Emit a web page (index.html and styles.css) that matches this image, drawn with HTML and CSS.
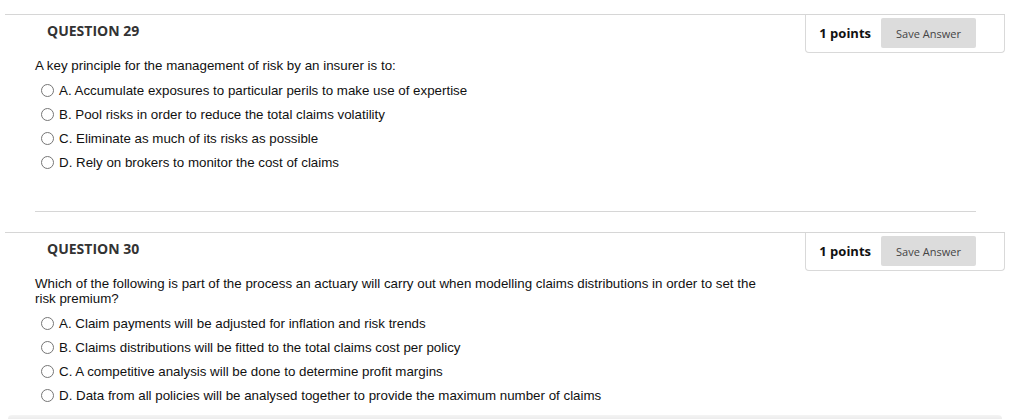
FILE: index.html
```html
<!DOCTYPE html>
<html>
<head>
<meta charset="utf-8">
<link rel="stylesheet" href="styles.css">
</head>
<body>
<div class="wrap">
  <section class="question">
    <div class="qhead">
      <h2 class="qtitle">QUESTION 29</h2>
      <div class="points">
        <span class="pts">1 points</span>
        <button class="save">Save Answer</button>
      </div>
    </div>
    <div class="qbody sep">
      <p class="qtext">A key principle for the management of risk by an insurer is to:</p>
      <ul class="opts">
        <li class="opt"><span class="radio"></span><span>A. Accumulate exposures to particular perils to make use of expertise</span></li>
        <li class="opt"><span class="radio"></span><span>B. Pool risks in order to reduce the total claims volatility</span></li>
        <li class="opt"><span class="radio"></span><span>C. Eliminate as much of its risks as possible</span></li>
        <li class="opt"><span class="radio"></span><span>D. Rely on brokers to monitor the cost of claims</span></li>
      </ul>
    </div>
  </section>
  <section class="question">
    <div class="qhead">
      <h2 class="qtitle">QUESTION 30</h2>
      <div class="points">
        <span class="pts">1 points</span>
        <button class="save">Save Answer</button>
      </div>
    </div>
    <div class="qbody">
      <p class="qtext">Which of the following is part of the process an actuary will carry out when modelling claims distributions in order to set the risk premium?</p>
      <ul class="opts">
        <li class="opt"><span class="radio"></span><span>A. Claim payments will be adjusted for inflation and risk trends</span></li>
        <li class="opt"><span class="radio"></span><span>B. Claims distributions will be fitted to the total claims cost per policy</span></li>
        <li class="opt"><span class="radio"></span><span>C. A competitive analysis will be done to determine profit margins</span></li>
        <li class="opt"><span class="radio"></span><span>D. Data from all policies will be analysed together to provide the maximum number of claims</span></li>
      </ul>
    </div>
  </section>
  <div class="nextbar"></div>
</div>
</body>
</html>
```

FILE: styles.css
```css
html, body {
  margin: 0;
  padding: 0;
  background: #fff;
}
body {
  font-family: "Liberation Sans", Arial, sans-serif;
  color: #111;
}
.wrap {
  margin-left: 5px;
  width: 1000px;
  padding-top: 14px;
}
.question {
  border-top: 1px solid #d6d6d6;
  margin-bottom: 20px;
}
.qhead {
  display: flex;
  justify-content: space-between;
  align-items: flex-start;
}
.qtitle {
  margin: 7px 0 0 42px;
  font-family: "Open Sans", sans-serif;
  font-weight: 700;
  font-size: 14px;
  line-height: 18px;
  color: #333;
}
.points {
  display: flex;
  align-items: center;
  gap: 10px;
  padding: 3px 28px 4px 13px;
  border: 1px solid #d9d9d9;
  border-top: none;
  border-radius: 0 0 4px 4px;
}
.pts {
  font-family: "Open Sans", sans-serif;
  font-weight: 700;
  font-size: 13px;
  color: #111;
}
.save {
  width: 95px;
  height: 30px;
  border: none;
  border-radius: 2px;
  background: #dcdcdc;
  color: #444;
  font-family: "Open Sans", sans-serif;
  font-size: 11px;
  padding: 0;
}
.qbody {
  padding: 5px 29px 0 30px;
}
.qbody.sep .opts {
  padding-bottom: 37px;
  border-bottom: 1px solid #d6d6d6;
}
.qtext {
  margin: 0 0 5px;
  font-size: 13.33px;
  line-height: 15px;
  max-width: 735px;
  color: #111;
}
.opts {
  list-style: none;
  margin: 0;
  padding: 0;
}
.opt {
  display: flex;
  align-items: center;
  height: 24px;
  padding-left: 6px;
  gap: 5px;
  font-size: 13.33px;
  color: #111;
}
.radio {
  width: 11px;
  height: 11px;
  border: 1px solid #767676;
  border-radius: 50%;
  background: #fff;
  flex: none;
}
.nextbar {
  margin: -12px 3px 0 3px;
  height: 6px;
  border-radius: 4px 4px 0 0;
  background: linear-gradient(#f4f4f4, #e8e8e8);
}
```
